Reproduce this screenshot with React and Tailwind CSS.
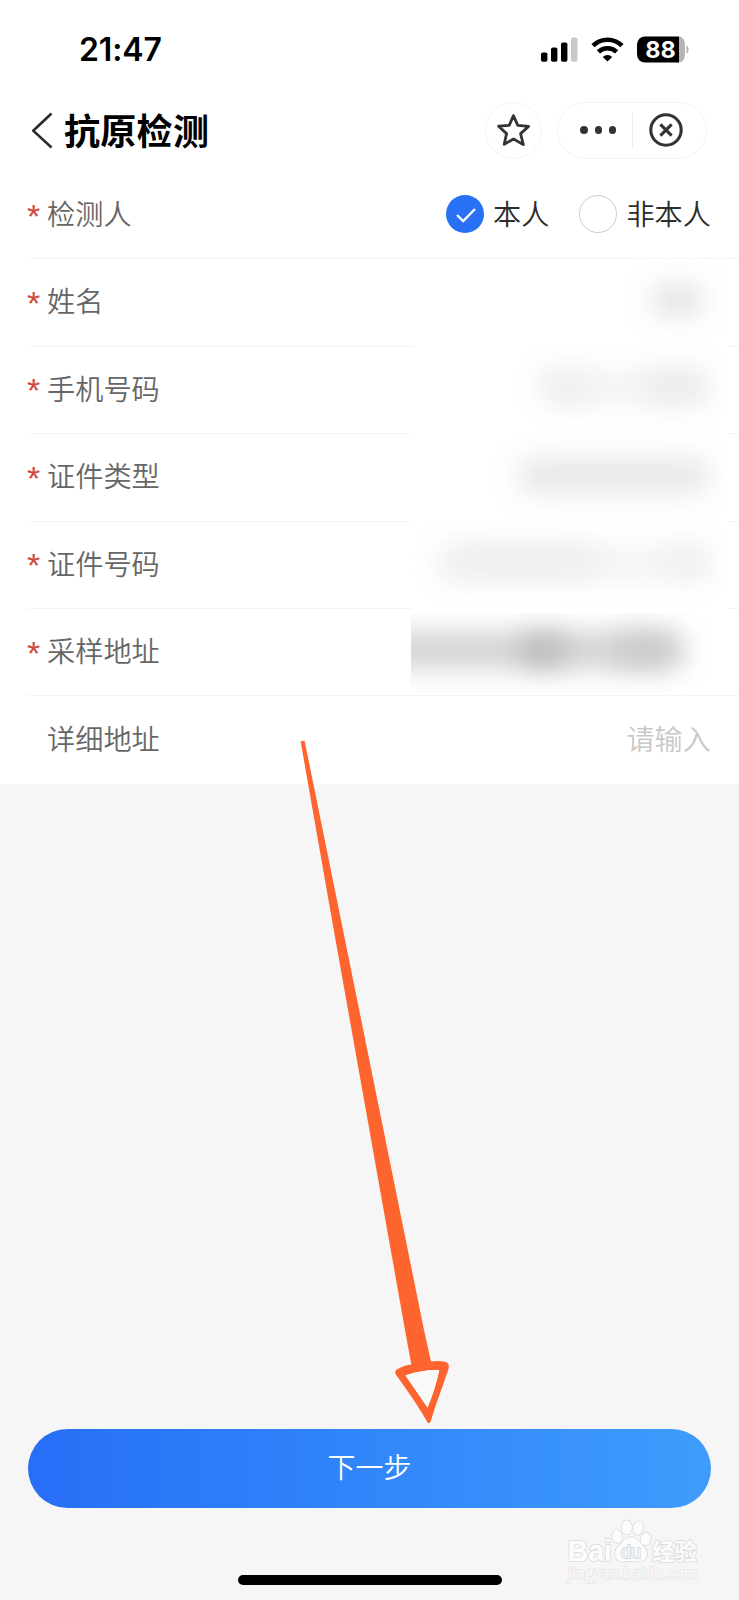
const fields = [
  {
    label: '姓名',
    mask: 'h-[86px] w-[324px]',
    blobs: [{ x: 248, y: 26, w: 50, h: 28, color: '#dfdfdf' }],
  },
  {
    label: '手机号码',
    mask: 'h-[89px] w-[313px]',
    blobs: [
      { x: 126, y: 27, w: 166, h: 29, color: '#f2f2f2' },
      { x: 128, y: 29, w: 46, h: 26, color: '#ededed' },
      { x: 230, y: 29, w: 62, h: 26, color: '#e9e9e9' },
    ],
  },
  {
    label: '证件类型',
    mask: 'h-[89px] w-[317px]',
    blobs: [{ x: 108, y: 27, w: 190, h: 31, color: '#e4e4e4' }],
  },
  {
    label: '证件号码',
    mask: 'h-[89px] w-[317px]',
    blobs: [
      { x: 26, y: 27, w: 270, h: 30, color: '#f3f3f3' },
      { x: 36, y: 29, w: 150, h: 26, color: '#ececec' },
      { x: 258, y: 29, w: 38, h: 26, color: '#ececec' },
    ],
  },
  {
    label: '采样地址',
    mask: 'h-[79px] w-[317px]',
    blobs: [
      { x: -40, y: 20, w: 312, h: 34, color: '#d0d0d0' },
      { x: 108, y: 23, w: 48, h: 28, color: '#b6b6b6' },
      { x: 202, y: 23, w: 60, h: 28, color: '#c8c8c8' },
    ],
  },
];

const StatusBar = () => (
  <div className="flex h-[99px] items-center justify-between pr-[49px] pl-[79px] font-['Inter',sans-serif]">
    <span className="pt-[1px] text-[32px] leading-none font-semibold tracking-[-0.1px] text-black">21:47</span>
    <svg width="150" height="28" viewBox="540 35.5 150 28" className="shrink-0">
      <rect x="541" y="52" width="6.4" height="9.2" rx="1.8" />
      <rect x="551" y="47" width="6.4" height="14.2" rx="1.8" />
      <rect x="561" y="42" width="6.4" height="19.2" rx="1.8" />
      <rect x="571" y="37" width="6.4" height="24.2" rx="1.8" fill="#c8c8c8" />
      <g fill="none" stroke="#000" strokeWidth="4.6">
        <path d="M593 45.2a20.5 20.5 0 0 1 29 0" />
        <path d="M598.4 51.4a13 13 0 0 1 18.2 0" />
      </g>
      <path d="M602.8 56.4a7 7 0 0 1 9.4 0L607.5 61z" />
      <path d="M645 36h34v26h-34a8 8 0 0 1-8-8V44a8 8 0 0 1 8-8z" />
      <path d="M679 36a6 8 0 0 1 6 8v10a6 8 0 0 1-6 8z" fill="#b5b5b5" />
      <path d="M687 45.5q2.6 3.5 0 7z" fill="#b5b5b5" stroke="#b5b5b5" />
      <text x="660.6" y="57.3" textAnchor="middle" fill="#fff" fontSize="23" fontWeight="700" textLength="30.5" lengthAdjust="spacingAndGlyphs">
        88
      </text>
    </svg>
  </div>
);

const NavBar = () => (
  <div className="flex h-[62px] items-center pr-8 pl-8">
    <svg width="22" height="38" viewBox="0 0 22 38" fill="none" stroke="#2b2b2b" strokeWidth="2.6">
      <path d="M19.5 2.5 1.2 19.7 19.5 36.5" />
    </svg>
    <h1 className="ml-[10px] pb-[3px] text-[36px] leading-none font-bold tracking-[0.3px] text-black">抗原检测</h1>
    <div className="ml-auto flex items-center gap-[15px]">
      <div className="flex h-[57px] w-[57px] items-center justify-center rounded-full border border-[#f4f4f4]">
        <svg width="36" height="36" viewBox="0 0 36 36" fill="none" stroke="#333" strokeWidth="2.8" strokeLinejoin="round">
          <path d="M17.4 3.6 21.8 13.4 32.6 14.4 24.6 21.6 27.3 32.6 17.6 27 8.2 32.2 10.6 21.6 2.6 14.2 13.2 13.4z" />
        </svg>
      </div>
      <div className="flex h-[57px] w-[150px] items-center rounded-full border border-[#f4f4f4]">
        <div className="flex h-[35px] w-[75px] items-center gap-[6.6px] border-r border-[#ececec] pl-[22.4px]">
          <span className="h-[7.6px] w-[7.6px] rounded-full bg-[#333]" />
          <span className="h-[7.6px] w-[7.6px] rounded-full bg-[#333]" />
          <span className="h-[7.6px] w-[7.6px] rounded-full bg-[#333]" />
        </div>
        <svg width="36" height="36" viewBox="0 0 36 36" className="ml-[15px]" fill="none" stroke="#333" strokeWidth="3.1">
          <circle cx="18" cy="18" r="15.2" />
          <path d="m12.4 12.4 11.2 11.2m0-11.2L12.4 23.6" />
        </svg>
      </div>
    </div>
  </div>
);

const Row = ({ label, required = true, last = false, children }) => (
  <div className={`ml-7 flex h-[87.4px] items-center pr-7 pb-[4px] ${last ? '' : 'border-b border-[#f5f5f5]'}`}>
    <span className="-ml-px w-5 pt-[5px] font-['Liberation_Sans',sans-serif] text-[34px] leading-none text-[#cf4a3c]">
      {required ? '*' : ''}
    </span>
    <span className="text-[28.2px] leading-none font-[350] text-[#666]">{label}</span>
    <div className="ml-auto flex items-center">{children}</div>
  </div>
);

// Value covered by a smudge so that private data stays unreadable
const HiddenValue = ({ mask, blobs }) => (
  <div className={`relative -mr-[17px] -mb-1 shrink-0 overflow-hidden bg-white ${mask}`}>
    {blobs.map((b, i) => (
      <span
        key={i}
        className="absolute rounded-xl blur-[14px]"
        style={{ left: b.x, top: b.y, width: b.w, height: b.h, background: b.color }}
      />
    ))}
  </div>
);

const Arrow = () => (
  <svg className="pointer-events-none absolute top-0 left-0" width="739" height="1600" viewBox="0 0 739 1600">
    <path d="M300.6 741.2 304.6 740.8 341 920 424 1330 431.3 1363 411.6 1366 405 1330 332 920z" fill="#fe642e" />
    <path
      fillRule="evenodd"
      fill="#fe642e"
      d="M397 1369.5Q404 1365 412 1364.5L431 1361.5Q439 1360.5 446 1362Q450 1364 448.5 1369C443 1386 436 1403 430.6 1421.5Q428.8 1425 427 1421.5C417 1404 407 1390 395.5 1374Q394.5 1371 397 1369.5zM405.5 1375.5 427.5 1407.5Q435 1390 439.3 1370Q422 1369.5 405.5 1375.5z"
    />
    <path d="M405.5 1375.5 427.5 1407.5Q435 1390 439.3 1370Q422 1369.5 405.5 1375.5z" fill="#fafafa" />
  </svg>
);

const Watermark = () => (
  <svg className="absolute right-9 bottom-3" width="140" height="70" viewBox="563 1518 140 70">
    <g fill="#fcfcfc" stroke="#dedede" strokeWidth="1.8" paintOrder="stroke" strokeLinejoin="round" fontFamily="'Liberation Sans', sans-serif">
      <text x="567.5" y="1561" fontSize="29" fontWeight="700" textLength="44.5" lengthAdjust="spacingAndGlyphs">
        Bai
      </text>
      <ellipse cx="617.2" cy="1536.5" rx="4.8" ry="6.6" transform="rotate(-12 617.2 1536.5)" />
      <ellipse cx="626.8" cy="1527.5" rx="5" ry="7" />
      <ellipse cx="638.2" cy="1528" rx="5" ry="6.8" transform="rotate(10 638.2 1528)" />
      <ellipse cx="645.8" cy="1539" rx="5" ry="6.3" transform="rotate(15 645.8 1539)" />
      <path d="M631 1537.5C637 1537.5 640 1543 644 1547C649 1552 648 1561.5 639 1561.5C633 1561.5 630 1560.5 624 1561.5C614 1562 613 1552 618 1547C622 1543 625 1537.5 631 1537.5z" />
      <text x="621" y="1558" fontSize="19" textLength="20" lengthAdjust="spacingAndGlyphs" fill="#f4f4f4" stroke="#d8d8d8">
        du
      </text>
      <text x="652" y="1559.5" fontSize="22.5" fontWeight="700" fontFamily="'Noto Sans CJK SC', sans-serif">
        经验
      </text>
      <text x="568" y="1579" fontSize="17" textLength="130" lengthAdjust="spacingAndGlyphs" fontFamily="'Open Sans', sans-serif" stroke="#e6e6e6">
        jingyan.baidu.com
      </text>
    </g>
  </svg>
);

export default function App() {
  return (
    <div className="relative flex h-[1600px] w-[739px] flex-col overflow-hidden bg-[#f6f6f6] font-['Noto_Sans_CJK_SC',sans-serif]">
      <div className="h-[784px] shrink-0 bg-white">
        <StatusBar />
        <NavBar />
        <div className="pt-[11px]">
          <Row label="检测人">
            <svg width="38" height="38" viewBox="0 0 38 38" className="mt-[2px]">
              <circle cx="19" cy="19" r="19" fill="#2870f5" />
              <path d="m11 20 6.2 6L29 14" fill="none" stroke="#fff" strokeWidth="2.4" />
            </svg>
            <span className="ml-[9px] text-[28.2px] leading-none font-[350] text-[#2d2d2d]">本人</span>
            <span className="mt-[2px] ml-[30px] h-[38px] w-[38px] rounded-full border-[1.5px] border-[#ccc]" />
            <span className="ml-[9px] text-[28.2px] leading-none font-[350] text-[#2d2d2d]">非本人</span>
          </Row>
          {fields.map((field) => (
            <Row key={field.label} label={field.label}>
              <HiddenValue mask={field.mask} blobs={field.blobs} />
            </Row>
          ))}
          <Row label="详细地址" required={false} last>
            <span className="text-[28.2px] leading-none font-[350] text-[#c8c8c8]">请输入</span>
          </Row>
        </div>
      </div>

      <div className="mt-auto flex flex-col items-center px-7 pb-[15px]">
        <button
          type="button"
          className="h-[79px] w-full rounded-full bg-linear-to-r from-[#276ef7] to-[#3f9cfc] pb-[6px] text-[28px] leading-none font-[350] text-white"
        >
          下一步
        </button>
        <div className="mt-[67px] h-[10px] w-[264px] rounded-full bg-black" />
      </div>

      <Arrow />
      <Watermark />
    </div>
  );
}
